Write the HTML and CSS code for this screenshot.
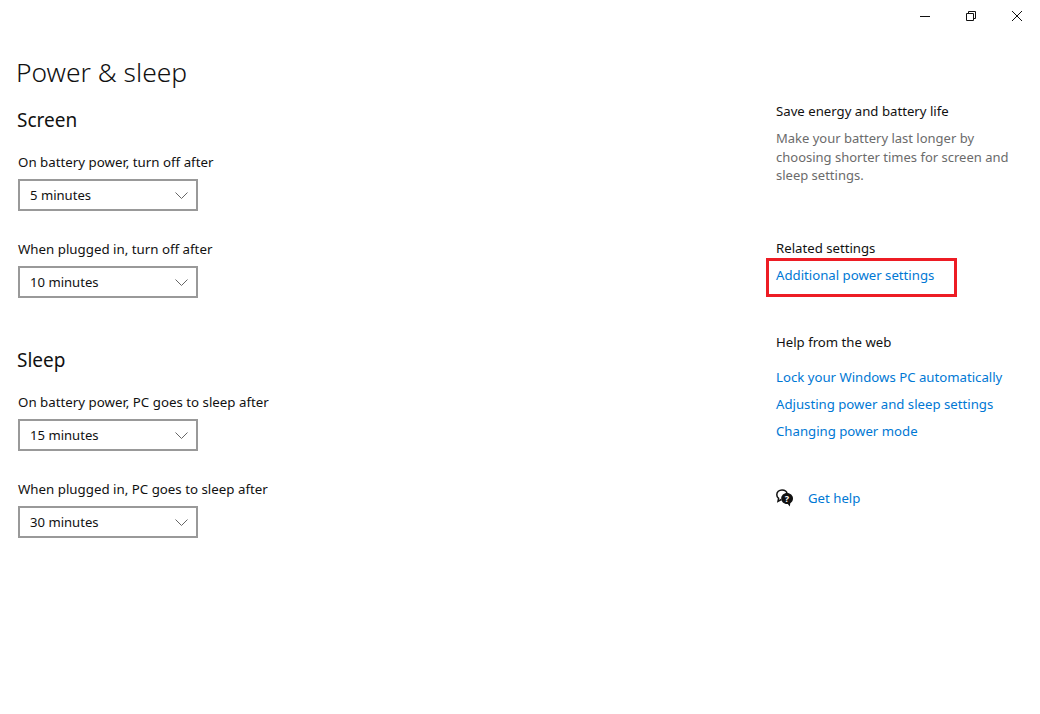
FILE: index.html
```html
<!DOCTYPE html>
<html lang="en">
<head>
  <meta charset="UTF-8" />
  <title>Power &amp; sleep</title>
  <link rel="stylesheet" href="styles.css">
</head>
<body>
  <div class="titlebar">
    <button class="win-btn" aria-label="Minimize">
      <svg width="12" height="12" viewBox="0 0 12 12"><path d="M1 6.500h10" stroke="#111" fill="none"/></svg>
    </button>
    <button class="win-btn" aria-label="Restore">
      <svg width="12" height="12" viewBox="0 0 12 12"><path d="M1.500 3.500h7v7h-7zM3.500 3.500v-2h7v7h-2" stroke="#111" fill="none"/></svg>
    </button>
    <button class="win-btn" aria-label="Close">
      <svg width="12" height="12" viewBox="0 0 12 12"><path d="M1 1l10 10M11 1L1 11" stroke="#111" fill="none"/></svg>
    </button>
  </div>

  <div class="page">
    <main class="settings">
      <h1>Power &amp; sleep</h1>

      <section class="group">
        <h2>Screen</h2>
        <div class="field">
          <label>On battery power, turn off after</label>
          <div class="select">5 minutes<svg class="chevron" width="13" height="7" viewBox="0 0 13 7"><path d="M.5.500l6 6 6-6" stroke="#666" fill="none"/></svg></div>
        </div>
        <div class="field">
          <label>When plugged in, turn off after</label>
          <div class="select">10 minutes<svg class="chevron" width="13" height="7" viewBox="0 0 13 7"><path d="M.5.500l6 6 6-6" stroke="#666" fill="none"/></svg></div>
        </div>
      </section>

      <section class="group">
        <h2>Sleep</h2>
        <div class="field">
          <label>On battery power, PC goes to sleep after</label>
          <div class="select">15 minutes<svg class="chevron" width="13" height="7" viewBox="0 0 13 7"><path d="M.5.500l6 6 6-6" stroke="#666" fill="none"/></svg></div>
        </div>
        <div class="field">
          <label>When plugged in, PC goes to sleep after</label>
          <div class="select">30 minutes<svg class="chevron" width="13" height="7" viewBox="0 0 13 7"><path d="M.5.500l6 6 6-6" stroke="#666" fill="none"/></svg></div>
        </div>
      </section>
    </main>

    <aside class="sidebar">
      <section class="side-block tip">
        <h3>Save energy and battery life</h3>
        <p>Make your battery last longer by choosing shorter times for screen and sleep settings.</p>
      </section>

      <section class="side-block related">
        <h3>Related settings</h3>
        <a href="#" class="link">Additional power settings</a>
        <div class="highlight"></div>
      </section>

      <section class="side-block web">
        <h3>Help from the web</h3>
        <a href="#" class="link">Lock your Windows PC automatically</a>
        <a href="#" class="link">Adjusting power and sleep settings</a>
        <a href="#" class="link">Changing power mode</a>
      </section>

      <div class="get-help">
        <svg width="18" height="18" viewBox="0 0 18 18">
          <path d="M6 .9C3 .9.8 3 .8 5.700c0 1.500.7 2.800 1.800 3.700L2 12.300l3.300-1.800" fill="#fff" stroke="#111" stroke-width="1.500"/>
          <path d="M6 .9c2.700 0 4.800 1.700 5.200 3.900" fill="none" stroke="#111" stroke-width="1.500"/>
          <path d="M11 4C7.800 4 5.200 6.400 5.200 9.500s2.600 5.500 5.800 5.500h.8l2 2.500.5-3.300c1.700-1 2.700-2.700 2.700-4.700C17 6.400 14.200 4 11 4z" fill="#111"/>
          <text x="11" y="13" class="help-mark">?</text>
        </svg>
        <a href="#" class="link">Get help</a>
      </div>
    </aside>
  </div>
</body>
</html>
```

FILE: styles.css
```css
body {
  margin: 0;
  height: 714px;
  overflow: hidden;
  background: #fff;
  color: #111;
  font-family: "Noto Sans", "Open Sans", sans-serif;
  font-size: 13.2px;
}

.titlebar {
  display: flex;
  justify-content: flex-end;
  height: 32px;
}

.win-btn {
  width: 46px;
  height: 32px;
  padding: 0;
  border: none;
  background: none;
  display: flex;
  align-items: center;
  justify-content: center;
}

.page {
  display: flex;
}

.settings {
  width: 776px;
  padding-left: 16px;
  box-sizing: border-box;
}

h1 {
  margin: 20px 0 0;
  font-size: 26.400px;
  font-weight: 300;
  line-height: 40px;
}

h2 {
  margin: 0;
  font-size: 19px;
  font-weight: 400;
  line-height: 28px;
}

.group {
  margin-top: 14px;
  padding-left: 1px;
}

.group + .group {
  margin-top: 48px;
}

.field {
  margin-top: 18px;
  padding-left: 1px;
}

.field + .field {
  margin-top: 28px;
}

label {
  display: block;
  font-size: 13.300px;
  line-height: 20px;
}

.select {
  display: flex;
  align-items: center;
  justify-content: space-between;
  width: 180px;
  height: 32px;
  margin-top: 7px;
  padding: 0 8px 0 10px;
  border: 2px solid #999;
  box-sizing: border-box;
  font-size: 13.100px;
}

.sidebar {
  width: 264px;
  padding-top: 69px;
  box-sizing: border-box;
}

h3 {
  margin: 0;
  font-size: 13.200px;
  font-weight: 400;
  line-height: 20px;
}

.side-block p {
  margin: 8px 0 0;
  width: 240px;
  color: #6b6b6b;
  font-size: 13px;
  line-height: 18.500px;
}

.related {
  position: relative;
  margin-top: 53px;
}

.web {
  margin-top: 47px;
}

.link {
  display: block;
  color: #0078d4;
  text-decoration: none;
  line-height: 20px;
  margin-top: 7px;
}

.web h3 + .link {
  margin-top: 15px;
}

.highlight {
  position: absolute;
  left: -10px;
  top: 20px;
  width: 191px;
  height: 39px;
  border: 3px solid #ed1c24;
  box-sizing: border-box;
}

.get-help {
  display: flex;
  align-items: center;
  gap: 14px;
  margin-top: 47px;
}

.get-help .link {
  margin: 0;
}

.help-mark {
  font-size: 9px;
  font-weight: 700;
  fill: #fff;
  text-anchor: middle;
}
```
